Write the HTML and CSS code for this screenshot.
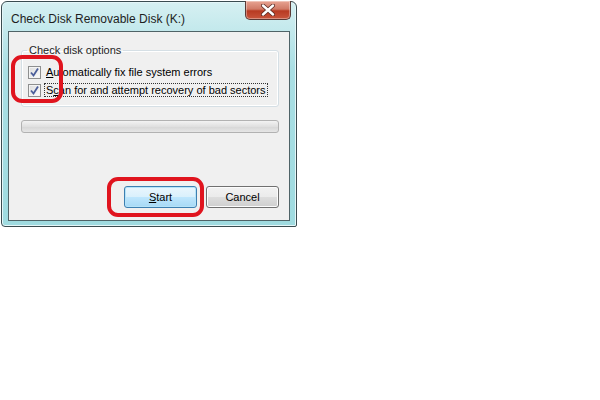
FILE: index.html
```html
<!DOCTYPE html>
<html lang="en">
  <head>
    <meta charset="UTF-8" />
    <title>Check Disk Removable Disk (K:)</title>
    <link rel="stylesheet" href="styles.css">
  </head>
  <body>
    <div class="window">
      <div class="titlebar">
        <div class="title">Check Disk Removable Disk (K:)</div>
        <div class="close-button">
          <svg width="14" height="12" viewBox="0 0 14 12">
            <path d="M2 1.5 L12 10.5 M12 1.5 L2 10.5" stroke="#5a2a22" stroke-width="4" stroke-linecap="round" />
            <path d="M2 1.5 L12 10.5 M12 1.5 L2 10.5" stroke="white" stroke-width="2.4" stroke-linecap="round" />
          </svg>
        </div>
      </div>
      <div class="client">
        <fieldset class="options">
          <legend>Check disk options</legend>
          <label class="option">
            <span class="checkbox">
              <svg width="11" height="11" viewBox="0 0 11 11">
                <path d="M2 5.5 L4.5 8.5 L9 1.5" stroke="#4b5e9a" stroke-width="1.8" fill="none" />
              </svg>
            </span>
            <span class="option-text"><u>A</u>utomatically fix file system errors</span>
          </label>
          <label class="option">
            <span class="checkbox">
              <svg width="11" height="11" viewBox="0 0 11 11">
                <path d="M2 5.5 L4.5 8.5 L9 1.5" stroke="#4b5e9a" stroke-width="1.8" fill="none" />
              </svg>
            </span>
            <span class="option-text focused">S<u>c</u>an for and attempt recovery of bad sectors</span>
          </label>
        </fieldset>
        <div class="progress"></div>
        <div class="spacer"></div>
        <div class="buttons">
          <button class="button default"><u>S</u>tart</button>
          <button class="button">Cancel</button>
        </div>
      </div>
    </div>

    <div class="mark mark-checks"></div>
    <div class="mark mark-start"></div>
  </body>
</html>
```

FILE: styles.css
```css
body {
  margin: 0;
  background-color: #fff;
  font-family: "Liberation Sans", Arial, sans-serif;
  font-size: 11px;
  color: #000;
  position: relative;
  height: 400px;
  overflow: hidden;
}

.window {
  box-sizing: border-box;
  width: 296px;
  height: 226px;
  margin: 1px 0 0 1px;
  padding: 0 6px 5px 6px;
  border: 1px solid #3a4c50;
  border-radius: 6px 6px 2px 4px;
  background: linear-gradient(#d6f0f2, #a9dfe4 30%, #9fdbe0);
  box-shadow: inset 0 0 0 1px #e4f6f8;
  display: flex;
  flex-direction: column;
}

.titlebar {
  height: 29px;
  flex-shrink: 0;
  display: flex;
  justify-content: space-between;
  align-items: flex-start;
}

.title {
  margin: 10px 0 0 3px;
  font-size: 12px;
  color: #1e1e1e;
}

.close-button {
  width: 44px;
  height: 18px;
  margin: -1px -1px 0 0;
  border: 1px solid #5b3a36;
  border-top: none;
  border-radius: 0 0 5px 5px;
  background: linear-gradient(#e8a493, #d07a66 45%, #b83a22 55%, #c8553c);
  box-shadow: inset 0 0 0 1px rgba(255, 255, 255, 0.35);
  display: flex;
  align-items: center;
  justify-content: center;
}

.client {
  flex: 1;
  display: flex;
  flex-direction: column;
  padding: 0 10px 12px 12px;
  background-color: #f0f0f0;
  border: 1px solid #4f6367;
}

.options {
  margin: 12px 0 0 0;
  padding: 7px 6px 7px 6px;
  border: 1px solid #d5dfe5;
  border-radius: 3px;
  box-shadow: inset 0 0 0 1px #fff;
}

.options legend {
  padding: 0 2px;
  margin-left: -1px;
  color: #1e1e1e;
}

.option {
  display: flex;
  align-items: center;
  gap: 3px;
  height: 18px;
  white-space: nowrap;
}

.checkbox {
  width: 11px;
  height: 11px;
  border: 1px solid #8e8f8f;
  background: linear-gradient(135deg, #dcdcdc, #fdfdfd);
  box-shadow: inset 0 0 0 1px #f4f4f4;
  display: flex;
}

.option-text {
  padding: 0 1px;
  border: 1px dotted transparent;
}

.option-text.focused {
  border-color: #333;
}

.progress {
  margin-top: 13px;
  height: 11px;
  border: 1px solid #b2b2b2;
  border-radius: 3px;
  background: linear-gradient(#f3f3f3, #e0e0e0 50%, #d6d6d6 51%, #e6e6e6);
}

.spacer {
  flex: 1;
}

.buttons {
  display: flex;
  justify-content: flex-end;
  gap: 9px;
}

.button {
  width: 73px;
  height: 22px;
  padding: 0;
  font-family: "Liberation Sans", Arial, sans-serif;
  font-size: 11px;
  color: #000;
  border: 1px solid #707070;
  border-radius: 3px;
  background: linear-gradient(#f2f2f2, #ebebeb 50%, #dddddd 51%, #cfcfcf);
  box-shadow: inset 0 0 0 1px #fcfcfc;
}

.button.default {
  border-color: #3c7fb1;
  background: linear-gradient(#eaf6fd, #d9f0fc 50%, #bee6fd 51%, #a7d9f5);
  box-shadow: inset 0 0 0 1px #b6e3f8;
}

.mark {
  position: absolute;
  border: 4px solid #e0141e;
  border-radius: 11px;
}

.mark-checks {
  left: 11px;
  top: 55px;
  width: 44px;
  height: 40px;
}

.mark-start {
  left: 107px;
  top: 177px;
  width: 89px;
  height: 32px;
}
```
